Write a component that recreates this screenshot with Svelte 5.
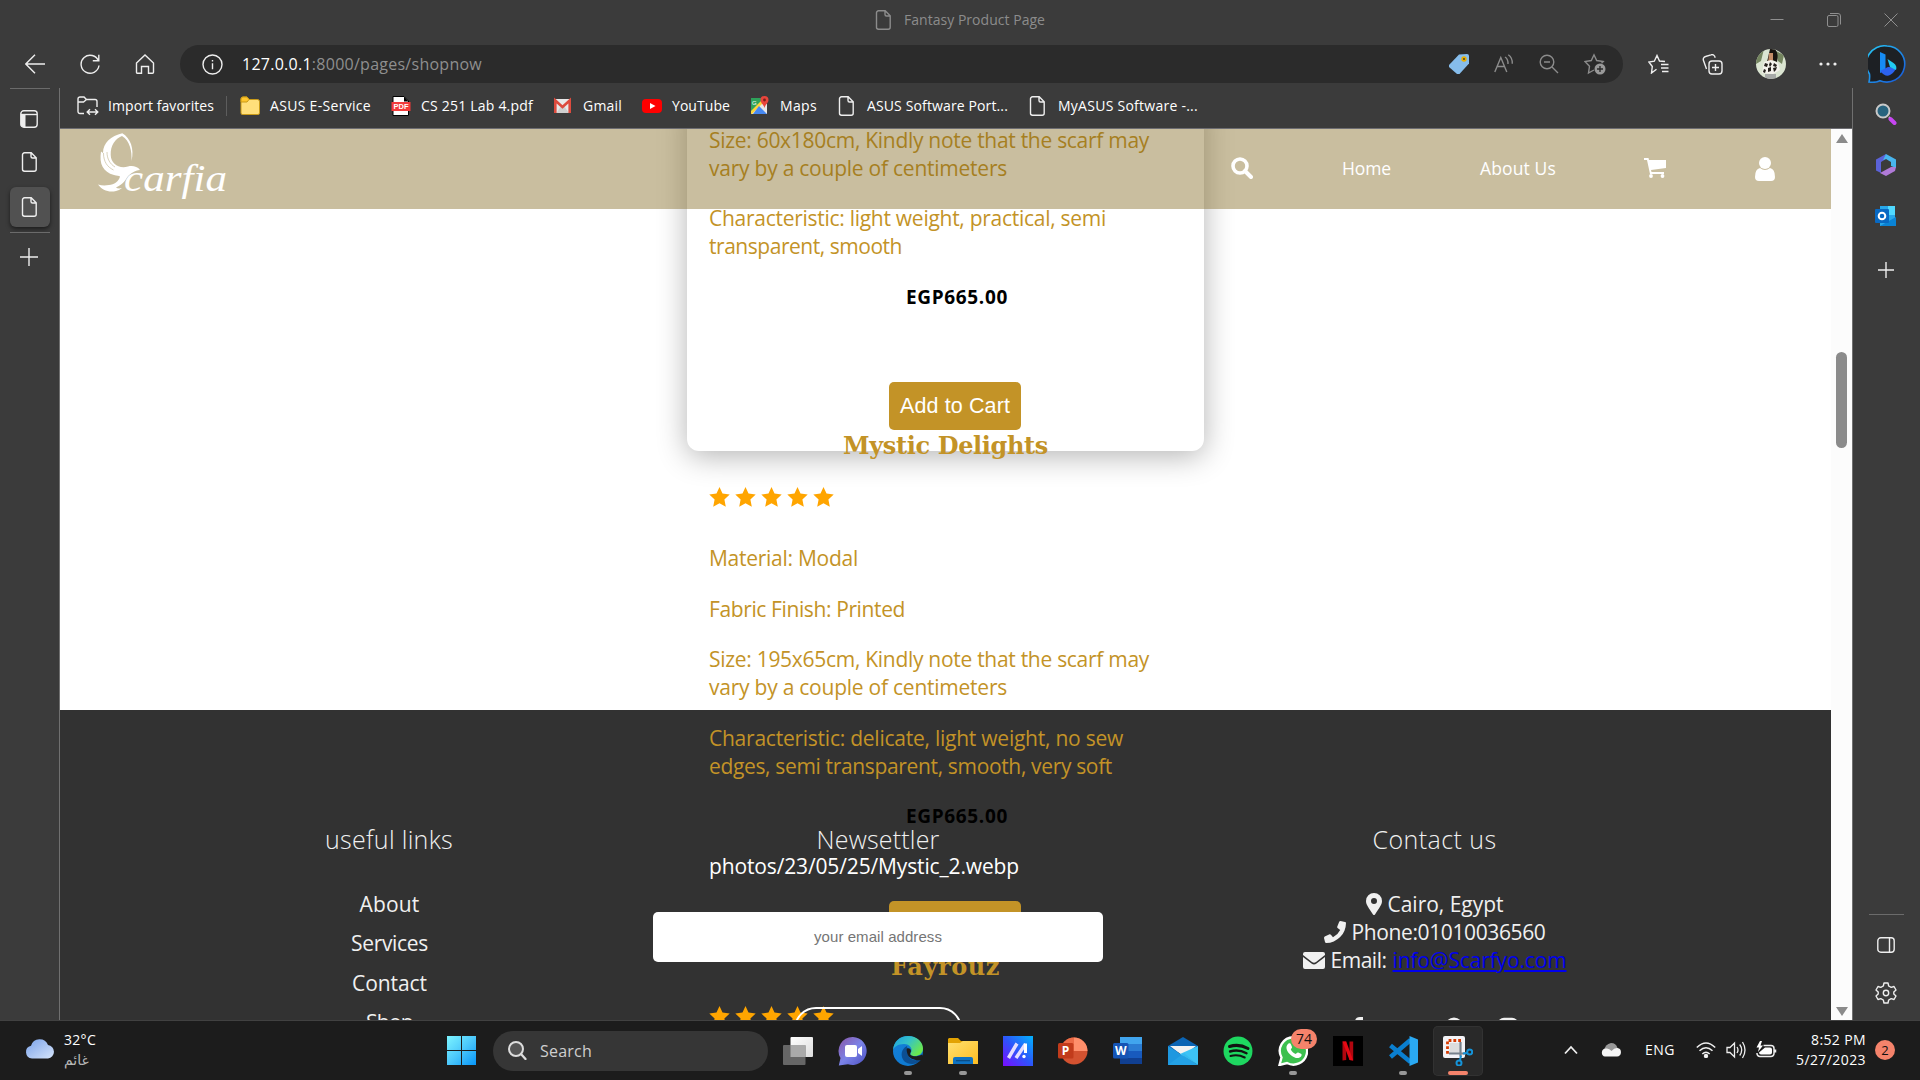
<script>
  // Spreads the letters of a label so that it fills the given width.
  function fit(node, width) {
    const natural = node.getBoundingClientRect().width;
    const spacing = (width - natural) / node.textContent.length;
    node.style.letterSpacing = `${spacing}px`;
  }

  const bookmarks = [
    { icon: 'folder', label: 'ASUS E-Service', width: 101 },
    { icon: 'pdf', label: 'CS 251 Lab 4.pdf', width: 112 },
    { icon: 'gmail', label: 'Gmail', width: 39 },
    { icon: 'youtube', label: 'YouTube', width: 58 },
    { icon: 'maps', label: 'Maps', width: 37 },
    { icon: 'page', label: 'ASUS Software Port...', width: 141 },
    { icon: 'page', label: 'MyASUS Software -...', width: 140 }
  ];
  const apps = [
    { icon: 'taskview' }, { icon: 'chat' }, { icon: 'edge', open: true },
    { icon: 'explorer', open: true }, { icon: 'myasus' }, { icon: 'powerpoint' },
    { icon: 'word' }, { icon: 'mail' }, { icon: 'spotify' },
    { icon: 'whatsapp', open: true, badge: '74' }, { icon: 'netflix' },
    { icon: 'vscode', open: true }, { icon: 'snip', active: true }
  ];
  const links = [['About', 60], ['Services', 77], ['Contact', 75], ['Shop', 47]];
</script>

{#snippet stars()}
  <div class="stars">
    {#each Array(5) as _}
      <svg width="21" height="20" viewBox="0 0 21 20"><path fill="#ffa500" d="M10.500 0l3 6.600 7.200.9-5.300 5 1.400 7.200-6.300-3.500-6.300 3.500 1.400-7.200-5.300-5 7.200-.9z" /></svg>
    {/each}
  </div>
{/snippet}

{#snippet icon(name)}
  {#if name === 'page'}
    <svg class="line" width="20" height="20" viewBox="0 0 20 20"><path d="M4.500.8h6.700l5 5v11.400a2 2 0 0 1-2 2H4.500a2 2 0 0 1-2-2V2.800a2 2 0 0 1 2-2zM11 1v3.500a1.500 1.500 0 0 0 1.500 1.500H16" /></svg>
  {:else if name === 'import'}
    <svg class="line" width="22" height="20" viewBox="0 0 22 20"><path d="M7 17.500H3a2 2 0 0 1-2-2V3a2 2 0 0 1 2-2h4l2.500 2.500H18a2 2 0 0 1 2 2V11M1 6h5.500l3-2.500M10.500 16h10M13 13.200 10.200 16l2.800 2.800M18 13.200l2.800 2.800-2.800 2.800" /></svg>
  {:else if name === 'folder'}
    <svg width="20" height="20" viewBox="0 0 20 20"><path d="M1 3a2 2 0 0 1 2-2h4l2 2.500h8.500A2 2 0 0 1 19.500 5.500V17a1.500 1.500 0 0 1-1.500 1.500H2.500A1.500 1.500 0 0 1 1 17z" fill="#ffdf7b" stroke="#c99a18" /><path d="M1 6V3a2 2 0 0 1 2-2h4l2 2.500L7 6z" fill="#ffc62e" stroke="#c99a18" /></svg>
  {:else if name === 'pdf'}
    <svg width="20" height="20" viewBox="0 0 20 20"><path d="M2 .5h11l4.500 4.500v14.500H2z" fill="#fff" stroke="#000" /><path d="M13 .5v5h4.500z" /><path fill="#f33b3b" d="M.5 6h19v9H.5z" /><text x="10" y="13.200" fill="#fff" font-size="7.500" font-weight="700" text-anchor="middle" font-family="Liberation Sans">PDF</text></svg>
  {:else if name === 'gmail'}
    <svg width="20" height="20" viewBox="0 0 20 20"><path fill="#e9e9e9" d="M1 3h17v14H1z" /><path fill="#cfcfcf" d="M3.500 17 8 10h3l5 7z" /><path d="M2.300 17V4.500L9.500 11l7.200-6.500V17" fill="none" stroke="#dd4b3e" stroke-width="2.600" /></svg>
  {:else if name === 'youtube'}
    <svg width="20" height="20" viewBox="0 0 20 20"><rect y="3" width="20" height="14" rx="4" fill="#f00" /><path fill="#fff" d="m8 7 5.500 3L8 13z" /></svg>
  {:else if name === 'maps'}
    <svg width="20" height="20" viewBox="0 0 20 20"><path fill="#2ea25a" d="M1 2h12v16H1z" /><path fill="#e8e8e8" d="M1 18 14 5l3 3v10z" /><path fill="#fbd33a" d="m1 15 11-11 2 2L2 18H1z" /><path fill="#4688f1" d="m9 10 8 8H3z" /><path d="M14.500 0a4 4 0 0 1 4 4c0 3-3 4-4 8-1-4-4-5-4-8a4 4 0 0 1 4-4z" fill="#e8453c" /><circle cx="14.500" cy="4" r="1.400" fill="#7b1f1a" /><text x="2" y="8.500" fill="#fff" font-size="6" font-family="Liberation Sans">G</text></svg>
  {:else if name === 'taskview'}
    <svg width="30" height="30" viewBox="0 0 30 30"><defs><linearGradient id="tv" x2="1" y2="1"><stop stop-color="#fff" /><stop offset="1" stop-color="#ddd" /></linearGradient></defs><rect x="7.500" y="1" width="22.500" height="20" rx="1" fill="url(#tv)" /><rect y="9" width="22.500" height="20" rx="1" fill="#666" /><path fill="#aaa" d="M7.500 9h15v12h-15z" /></svg>
  {:else if name === 'chat'}
    <svg width="30" height="30" viewBox="0 0 30 30"><defs><linearGradient id="ch" x2="1" y2="1"><stop stop-color="#8b55a5" /><stop offset=".5" stop-color="#7b83e8" /><stop offset="1" stop-color="#4b4fc0" /></linearGradient></defs><path fill="url(#ch)" d="M15 1a14 14 0 1 1-5 27.200L.8 29.500 2.500 22A14 14 0 0 1 15 1z" /><rect x="7" y="9" width="12" height="12" rx="2" fill="#fff" /><path fill="#fff" d="m20 13 4-3v10l-4-3z" /></svg>
  {:else if name === 'edge'}
    <svg width="30" height="30" viewBox="0 0 30 30"><defs><linearGradient id="e1" x2="1" y2=".6"><stop stop-color="#1b9de2" /><stop offset=".5" stop-color="#35c2c8" /><stop offset="1" stop-color="#6be84c" /></linearGradient><linearGradient id="e2" y2="1"><stop stop-color="#1680d8" /><stop offset="1" stop-color="#0b78d0" /></linearGradient></defs><circle cx="15" cy="15" r="15" fill="url(#e2)" /><path fill="#0c4f93" d="M14 10c-6 3-7 10-3 15 4 4 12 4 16 0 .7-.8 1-2 0-1.700-7 2.700-12-1-12-6z" /><path d="M0 14C1 5 7 0 15 0c9 0 15 6 15 12.500 0 5-4 7.500-8.500 7.500-3.500 0-5-1-3.500-3.500C20 13 17 8 11 8 5 8 1 11 0 14z" fill="url(#e1)" /><path fill="#1c1c1c" d="M14 12.500c2-1 4 .5 4 2.500-.3 2-2 3 .5 4.500 2 1.300 7 1 10.500-1l1 2-2 3.500c-5 1-12-1-13.500-6-.5-2-1.300-4.500-.5-5.500z" /></svg>
  {:else if name === 'explorer'}
    <svg width="30" height="30" viewBox="0 0 30 30"><defs><linearGradient id="ex" x2="1" y2="1"><stop stop-color="#ffe070" /><stop offset="1" stop-color="#fdbd22" /></linearGradient></defs><path fill="#e2a202" d="M1 2h9l3 3h17v10H0V3z" /><path fill="url(#ex)" d="M0 7h12l3-2h15v23H0z" /><path fill="#0e72c2" d="M5 23q0-2 2-2h16q2 0 2 2v5H5z" /><path fill="#0a4d86" d="M8 24h14v1.300H8z" /></svg>
  {:else if name === 'myasus'}
    <svg width="30" height="30" viewBox="0 0 30 30"><defs><linearGradient id="ma" x1="0" y1="1" x2="1" y2="0"><stop stop-color="#7a0cff" /><stop offset=".5" stop-color="#2d55fb" /><stop offset="1" stop-color="#02b4fd" /></linearGradient></defs><path fill="url(#ma)" d="M0 0h30v30H0z" /><path d="M5.500 22 14 7.500M13 22l9.500-14" stroke="#e5ddff" stroke-width="3.500" /><path d="M22.500 7.500V17" stroke="#fff" stroke-width="3" /><circle cx="21" cy="20.500" r="1.700" fill="#fff" /></svg>
  {:else if name === 'powerpoint'}
    <svg width="30" height="30" viewBox="0 0 30 30"><circle cx="16" cy="15" r="13.500" fill="#d35230" /><path fill="#ff8f6b" d="M16 1.500A13.500 13.500 0 0 1 29.500 15H16z" /><path fill="#ed6c47" d="M16 1.500V15H2.500A13.500 13.500 0 0 1 16 1.500z" /><rect y="7" width="15.500" height="15.500" rx="1.500" fill="#c13b1b" /><text x="7.500" y="19" fill="#fff" font-size="12" font-weight="700" text-anchor="middle" font-family="Open Sans">P</text></svg>
  {:else if name === 'word'}
    <svg width="30" height="30" viewBox="0 0 30 30"><path fill="#41a5ee" d="M7 1h22v7H7z" /><path fill="#2b7cd3" d="M7 8h22v7H7z" /><path fill="#185abd" d="M7 15h22v7H7z" /><path fill="#103f91" d="M7 22h22v6H7z" /><rect y="7" width="15.500" height="15.500" rx="1.500" fill="#1554b5" /><text x="7.700" y="19" fill="#fff" font-size="12" font-weight="700" text-anchor="middle" font-family="Open Sans">W</text></svg>
  {:else if name === 'mail'}
    <svg width="30" height="30" viewBox="0 0 30 30"><path fill="#0b64b4" d="M0 10 15 1l15 9v6H0z" /><path fill="#f2f2f2" d="M2 10h26L15 20z" /><path fill="#1e98e0" d="M0 10v19h30z" /><path fill="#3dc3f5" d="M30 10v19L12 18z" /><path fill="#2db0ee" d="M0 29 16 17l14 12z" opacity=".45" /></svg>
  {:else if name === 'spotify'}
    <svg width="30" height="30" viewBox="0 0 30 30"><circle cx="15" cy="15" r="14.500" fill="#1ed760" /><g fill="none" stroke="#121212" stroke-linecap="round"><path d="M6.500 10.500q9.500-3 18.500 2" stroke-width="3" /><path d="M7 15.500q8.500-2.500 16.500 1.700" stroke-width="2.400" /><path d="M7.500 20q7.500-2 14.200 1.500" stroke-width="2" /></g></svg>
  {:else if name === 'whatsapp'}
    <svg width="30" height="30" viewBox="0 0 30 30"><path d="M15.500 1.200A13.700 13.700 0 1 1 9 27l-7.500 2 2-7.500A13.700 13.700 0 0 1 15.500 1.200z" fill="#3cc04e" stroke="#fff" stroke-width="2.400" /><path fill="#fff" d="M10.500 7.500c1-.7 2-.3 2.500 1l1 2.500c.2 1-.8 1.600-1.200 2.400 1 2 2.700 3.600 5 4.600.8-.6 1.400-1.900 2.400-1.500l2.800 1.300c1 .6.700 2-.2 3-2.800 2.500-6.500 1-9.500-1.300-3-2.400-5.500-6-4.700-9.300.3-1.200 1-2 1.900-2.700z" /></svg>
  {:else if name === 'netflix'}
    <svg width="30" height="30" viewBox="0 0 30 30"><path d="M0 0h30v30H0z" /><path fill="#b1060f" d="M9.500 5.500h3.700V24l-3.700.5zM16.500 5.500h3.700v19l-3.700-.5z" /><path fill="#e50914" d="M9.500 5.500h3.700l7 19-3.700-.5z" /></svg>
  {:else if name === 'vscode'}
    <svg width="30" height="30" viewBox="0 0 30 30"><path fill="none" stroke="#0a7fd0" stroke-width="4.500" stroke-linejoin="round" d="m22.500 4-20 17M2.500 9.500l20 16.500" /><path fill="#2aa9f3" d="M21.500 0 30 3.500v23L21.500 30z" /></svg>
  {:else if name === 'snip'}
    <svg width="30" height="30" viewBox="0 0 30 30"><rect width="22" height="22" rx="2" fill="#f3f3f6" /><path fill="none" stroke="#d63b02" stroke-width="2.800" stroke-dasharray="2.800 2" d="M18 4.500H4.500V18" /><path d="M6.500 7h10v11h-10z" fill="#ddd" /><path fill="none" stroke="#77818b" stroke-width="2.200" d="M17.500 6v14.500M6 17.500h17" /><g fill="none" stroke="#1593d8" stroke-width="2"><circle cx="26.700" cy="16" r="2.500" /><circle cx="16" cy="27" r="2.500" /><path d="m17 24.500 1-5M20 17.500l4-.5" /></g></svg>
  {/if}
{/snippet}

<div class="screen">
  <header class="titlebar">
    <div class="caption">{@render icon('page')}<span use:fit={141}>Fantasy Product Page</span></div>
    <div class="window-buttons">
      <svg width="14" height="14" viewBox="0 0 14 14"><path d="M.5 6.500h13" /></svg>
      <svg width="14" height="14" viewBox="0 0 14 14"><rect x=".5" y="2.500" width="10.500" height="11" rx="1.500" /><path d="M3 .5h8a2.500 2.500 0 0 1 2.500 2.500v8.500" /></svg>
      <svg width="14" height="14" viewBox="0 0 14 14"><path d="m.5.500 13 13m0-13-13 13" /></svg>
    </div>
  </header>

  <div class="toolbar">
    <div class="nav-icons line">
      <svg width="20" height="20" viewBox="0 0 20 20"><path d="M20 10H.8M10 .8.8 10l9.200 9.200" /></svg>
      <svg width="20" height="20" viewBox="0 0 20 20"><path d="M18.500 7A9 9 0 1 0 19 11.500M18.800.8v6h-6" /></svg>
      <svg width="20" height="20" viewBox="0 0 20 20"><path d="M1.500 9 10 1l8.500 8v9.200a1 1 0 0 1-1 1h-4v-6.700h-7v6.700h-4a1 1 0 0 1-1-1z" /></svg>
    </div>
    <div class="address">
      <svg class="line" width="21" height="21" viewBox="0 0 21 21"><circle cx="10.500" cy="10.500" r="9.500" /><path d="M10.500 9.200v6M10.500 6v1.500" /></svg>
      <span class="url" use:fit={240}><b>127.0.0.1</b>:8000/pages/shopnow</span>
      <div class="address-icons line">
        <svg class="tag" width="20" height="20" viewBox="0 0 20 20"><path fill="#86bdec" stroke="none" d="M10 .5 18 0a2 2 0 0 1 2 2v7.500L10.500 20H8L0 13v-2z" /><circle cx="15" cy="5" r="1.800" fill="#333" stroke="#e8ae00" stroke-width="1.800" /></svg>
        <svg width="20" height="20" viewBox="0 0 20 20"><path d="m.8 18 6-14.500 6 14.500M3 12.500h7.500M11 3q3.200 2 3 7M14.300.8q4.300 3 4 9" /></svg>
        <svg width="20" height="20" viewBox="0 0 20 20"><circle cx="8" cy="8" r="6.800" /><path d="m13 13 6 6M5 8h6" /></svg>
        <svg width="22" height="22" viewBox="0 0 22 22"><path d="m10 17-5.500 3 1-6.700L1 8.500l6.300-1L10 1.800l2.700 5.700 6.500 1-1.700 1.700" /><circle cx="16" cy="16" r="5.500" fill="#999" stroke="none" /><path stroke="#2b2b2b" d="M16 13v6M13 16h6" /></svg>
      </div>
    </div>
    <div class="tools line">
      <svg width="21" height="20" viewBox="0 0 21 20"><path d="m8.500 15.300-5 3.700.8-6.500L.8 8l5.500-.8L9 1.500 11.500 7l5.500.5M13 10.500h7.500M13 14h7.500M14 17.500h6.500" /></svg>
      <svg width="21" height="21" viewBox="0 0 21 21"><rect x="7" y="7" width="13" height="13" rx="3" /><path d="M13.500 10v7M10 13.500h7M4.500 15 1.500 6.500a3 3 0 0 1 2-4L9 .800a3 3 0 0 1 4 3" /></svg>
      <svg class="avatar" width="30" height="30" viewBox="0 0 30 30"><clipPath id="av"><circle cx="15" cy="15" r="15" /></clipPath><g clip-path="url(#av)" stroke="none"><path fill="#dbe5d2" d="M0 0h30v30H0z" /><path fill="#74855f" d="M0 3 8 0 5 12l-5 3zM20 2l8 4-2 9-4-3z" /><path fill="#17130f" d="M14 0h5q4 5 2 13l-7-3-3 3z" /><path fill="#c38c68" d="M13 4h4v7l-5 4z" /><path fill="#f4f2ed" d="m8 13 7-2 7 3 2 7-7 4-11-1z" /><path fill="#24201c" d="m9 14 3 1-1 3-3-1zM14 13l2 2-2 3-1-2zM18 14l3 2-1 2-3-1zM12 19l3-1v4l-3 1zM17 19l4-1-1 3-2 2zM8 20l2 1-1 3-2-1z" /><path fill="#a7aaa8" d="M9 25h11v6H9z" /></g></svg>
      <svg width="18" height="4" viewBox="0 0 18 4"><g fill="#eee" stroke="none"><circle cx="2" cy="2" r="1.600" /><circle cx="9" cy="2" r="1.600" /><circle cx="16" cy="2" r="1.600" /></g></svg>
      <svg class="bing" width="38" height="38" viewBox="0 0 38 38"><defs><linearGradient id="bg" y2="1"><stop stop-color="#27c9f5" /><stop offset="1" stop-color="#1754d8" /></linearGradient></defs><path fill="#1d2024" stroke="url(#bg)" stroke-width="1.600" d="M19 1a18 18 0 1 1-7 34.700Q7 38 1 37q1-4 .5-8A18 18 0 0 1 19 1z" /><path fill="#168cf4" stroke="none" d="m12 7 5.500 2.500V25L12 28z" /><path fill="#2c62ef" stroke="none" d="m12 26 8-4 8 .5q-1 4.500-6 7.500-4.500 2.500-10-4z" /><path fill="#21caf1" stroke="none" d="m19.500 14 6 4q4 3 2.500 7l-6-3z" /></svg>
    </div>
  </div>

  <div class="body">
    <aside class="left line">
      <svg width="18" height="18" viewBox="0 0 18 18"><rect x=".8" y=".8" width="16.400" height="16.400" rx="3" /><path d="M1 4.500h16" /><path fill="#eee" stroke="none" d="M1 4h4.500v13H3a2 2 0 0 1-2-2z" /></svg>
      <span class="tab">{@render icon('page')}</span>
      <span class="tab active">{@render icon('page')}</span>
      <svg class="plus" width="18" height="18" viewBox="0 0 18 18"><path d="M9 0v18M0 9h18" /></svg>
    </aside>

    <div class="center">
      <div class="bookmarks">
        <div class="bookmark import">{@render icon('import')}<span use:fit={106}>Import favorites</span></div>
        {#each bookmarks as b}
          <div class="bookmark">{@render icon(b.icon)}<span use:fit={b.width}>{b.label}</span></div>
        {/each}
      </div>

      <div class="view">
        <main class="page">
          <div class="footer-back"></div>

          <div class="products">
            <section class="card">
              <p><span use:fit={440}>Size: 60x180cm, Kindly note that the scarf may</span><span use:fit={298}>vary by a couple of centimeters</span></p>
              <p><span use:fit={397}>Characteristic: light weight, practical, semi</span><span use:fit={193}>transparent, smooth</span></p>
              <div class="price"><span use:fit={102}>EGP665.00</span></div>
              <button class="add"><span use:fit={110}>Add to Cart</span></button>
            </section>
            <section class="product">
              <h2><span use:fit={205}>Mystic Delights</span></h2>
              {@render stars()}
              <p><span use:fit={149}>Material: Modal</span></p>
              <p class="finish"><span use:fit={196}>Fabric Finish: Printed</span></p>
              <p><span use:fit={440}>Size: 195x65cm, Kindly note that the scarf may</span><span use:fit={298}>vary by a couple of centimeters</span></p>
              <p><span use:fit={414}>Characteristic: delicate, light weight, no sew</span><span use:fit={403}>edges, semi transparent, smooth, very soft</span></p>
              <div class="price"><span use:fit={102}>EGP665.00</span></div>
              <p class="file"><span use:fit={310}>photos/23/05/25/Mystic_2.webp</span></p>
              <button class="add"><span use:fit={110}>Add to Cart</span></button>
              <h2 class="next"><span use:fit={109}>Fayrouz</span></h2>
              {@render stars()}
            </section>
          </div>

          <footer>
            <div class="col">
              <h3><span use:fit={128}>useful links</span></h3>
              <div class="links">
                {#each links as [label, width]}<a href="#top"><span use:fit={width}>{label}</span></a>{/each}
              </div>
            </div>
            <div class="col">
              <h3><span use:fit={123}>Newsettler</span></h3>
              <div class="email"><span use:fit={128}>your email address</span></div>
              <div class="subscribe"></div>
            </div>
            <div class="col contact-col">
              <h3><span use:fit={124}>Contact us</span></h3>
              <div class="contact">
                <div><svg width="16" height="22" viewBox="0 0 16 22"><path fill-rule="evenodd" d="M8 0a8 8 0 0 1 8 8c0 4-3 7-7 13.400q-1 1.200-2 0C3 15 0 12 0 8a8 8 0 0 1 8-8zm0 5a3 3 0 1 0 0 6 3 3 0 0 0 0-6z" /></svg><span use:fit={116}>Cairo, Egypt</span></div>
                <div><svg width="22" height="22" viewBox="0 0 22 22"><path d="m21 1-4.500-1q-1 0-1.300.8l-2 4.900q-.2.800.4 1.300l2.600 2.100a16 16 0 0 1-7.200 7.200l-2.100-2.600q-.5-.6-1.300-.4l-4.900 2.100Q0 16 0 17l1 4q.3 1 1.200 1A20 20 0 0 0 22 2.100Q22 1.200 21 1z" /></svg><span use:fit={194}>Phone:01010036560</span></div>
                <div><svg width="22" height="17" viewBox="0 0 22 17"><path d="M2 0h18a2 2 0 0 1 2 2v1l-9 7q-2 1.500-4 0L0 3V2a2 2 0 0 1 2-2zM0 5l8.500 6.500q2.500 2 5 0L22 5v10a2 2 0 0 1-2 2H2a2 2 0 0 1-2-2z" /></svg><span use:fit={56}>Email:</span><a href="mailto:info@Scarfyo.com"><span use:fit={174}>info@Scarfyo.com</span></a></div>
              </div>
              <div class="social">
                <svg width="13" height="22" viewBox="0 0 13 22"><path d="M12 0v3.500h-2Q8 3.500 8 5.500V8h4l-.6 4H8v10H4V12H0V8h4V5Q4 0 9 0z" /></svg>
                <svg width="18" height="22" viewBox="0 0 18 22"><circle cx="9" cy="9.500" r="9" /></svg>
                <svg width="20" height="20" viewBox="0 0 20 20"><rect x="1" y="2" width="18" height="18" rx="5" fill="none" stroke="#f0f0f0" stroke-width="2.500" /></svg>
              </div>
            </div>
          </footer>

          <nav>
            <svg class="logo" width="136" height="76" viewBox="0 0 136 76">
              <path d="M25.300 2.300C14 5 6 12 6 22L4 20.500C2 33 6 41 17 44c3 1 5 .5 6 1.500-1 5-6 8-11 8.500q-6 1-11-.5C5 59 12 62 19 60q3-.6 6-3-4 1-6-.5c7-3 9-7 11-10 3-4 8-7 13-7.500-3-4-8-4.500-12-3.500C22 38 14 33 13.700 24 13.500 14 18 8 25 5c8 5 10 15 9.500 25 3-12-1-23-9.200-27.700z" />
              <path class="fold" d="M6.500 22c0 9 4 14 10 17M10 21c0 7 3 12 8 15" />
              <text x="27" y="60" textLength="103" lengthAdjust="spacingAndGlyphs">carfia</text>
            </svg>
            <svg width="22" height="22" viewBox="0 0 22 22"><circle cx="9" cy="9" r="7" fill="none" stroke="#fff" stroke-width="3.600" /><path d="m14 14 6 6" stroke="#fff" stroke-width="4" stroke-linecap="round" /></svg>
            <span class="home" use:fit={49}>Home</span>
            <span class="about" use:fit={76}>About Us</span>
            <svg class="cart" width="22" height="20" viewBox="0 0 22 20"><path d="M0 0h4.500L5 2h17v8L7 12l.5 2H20v2H6L3 2H0z" /><circle cx="7" cy="18" r="1.900" /><circle cx="18.500" cy="18" r="1.900" /></svg>
            <svg class="user" width="20" height="24" viewBox="0 0 20 24"><circle cx="10" cy="6" r="6" /><path d="M5 11q5 4 10 0 5 1 5 9 0 4-4 4H4q-4 0-4-4 0-8 5-9z" /></svg>
          </nav>
        </main>
        <div class="scrollbar"><i class="up"></i><i class="thumb"></i><i class="down"></i></div>
      </div>
    </div>

    <aside class="right line">
      <svg width="22" height="22" viewBox="0 0 22 22"><circle cx="8" cy="8" r="6.500" fill="#28637e" stroke="#c9c9c9" stroke-width="2" /><path d="m14 14 1.500 1.500" stroke="#c9c9c9" stroke-width="2" /><path d="m15.500 16 4 4" stroke="#c746f2" stroke-width="4" stroke-linecap="round" /></svg>
      <svg width="22" height="22" viewBox="0 0 22 22"><g stroke="none"><path fill="#5b62d8" d="M11 0 1 5.500v11L6 19V8l5-3z" /><path fill="#48b5ee" d="m11 0 10 5.500V14l-5-2V8l-5-3-3 1z" /><path fill="#b07ad8" d="m21 13-1 4-9 5-6-3 11-6z" /></g></svg>
      <svg width="22" height="22" viewBox="0 0 22 22"><g stroke="none"><path fill="#28a8ea" d="M5 1h15v20H5z" /><path fill="#50d9ff" d="M13 1h7v9h-7z" /><path fill="#0a83d5" d="m5 21 16-9v9z" /><rect y="4" width="14" height="14" rx="1" fill="#0869c3" /></g><circle cx="7" cy="11" r="3.300" stroke="#fff" stroke-width="2" /></svg>
      <svg width="16" height="16" viewBox="0 0 16 16"><path d="M8 0v16M0 8h16" /></svg>
      <svg class="panel" width="18" height="16" viewBox="0 0 18 16"><rect x=".8" y=".8" width="16.400" height="14.400" rx="3" /><path d="M12.500 1v14" /></svg>
      <svg class="gear" width="22" height="22" viewBox="0 0 22 22"><path d="M9 1h4l.7 3 2.500 1.400L19 4.500 21 8l-2.200 2v2L21 14l-2 3.500-2.800-.9-2.500 1.400L13 21H9l-.7-3-2.500-1.400-2.800.9L1 14l2.200-2v-2L1 8l2-3.500 2.800.9L8.300 4z" stroke-linejoin="round" /><circle cx="11" cy="11" r="2.700" /></svg>
    </aside>
  </div>

  <div class="taskbar">
    <svg class="weather" width="30" height="20" viewBox="0 0 30 20"><defs><linearGradient id="cl" y2="1"><stop stop-color="#7ba3ea" /><stop offset="1" stop-color="#d5e4fb" /></linearGradient></defs><path fill="url(#cl)" d="M7 19.500a6.500 6.500 0 0 1-1-12.800A9 9 0 0 1 23 6a6.800 6.800 0 0 1 0 13.500z" /></svg>
    <div class="temp"><span use:fit={32}>32°C</span><span class="arabic">غائم</span></div>
    <svg class="start" width="29" height="29" viewBox="0 0 29 29"><defs><linearGradient id="wn" x2="29" y2="29" gradientUnits="userSpaceOnUse"><stop stop-color="#7df5ff" /><stop offset=".5" stop-color="#4cc8fb" /><stop offset="1" stop-color="#0795f8" /></linearGradient></defs><path fill="url(#wn)" d="M0 0h14v14H0zM15 0h14v14H15zM0 15h14v14H0zM15 15h14v14H15z" /></svg>
    <div class="search"><svg width="19" height="19" viewBox="0 0 19 19"><circle cx="8" cy="8" r="7" fill="#555" stroke="#ddd" stroke-width="2" /><path d="m13 13 4.500 5" stroke="#ddd" stroke-width="2.300" stroke-linecap="round" /></svg><span use:fit={52}>Search</span></div>
    <div class="apps">
      {#each apps as app}
        <div class="app" class:open={app.open} class:current={app.active}>
          {@render icon(app.icon)}
          {#if app.badge}<span class="badge">{app.badge}</span>{/if}
        </div>
      {/each}
    </div>
    <div class="tray line">
      <svg class="chevron" width="14" height="10" viewBox="0 0 14 10"><path d="m1 8.500 6-6.500 6 6.500" stroke-width="1.800" /></svg>
      <svg class="onedrive" width="20" height="14" viewBox="0 0 20 14"><path fill="#999" stroke="none" d="M3 8Q4 1 10 0q5 0 6.500 5L7 12z" /><path fill="#f5f5f5" stroke="none" d="M4 13.500a4 4 0 0 1 1-7.900q3-.6 5.500 2.400 3-3.500 6-3a4.300 4.300 0 0 1-.5 8.500z" /></svg>
      <span class="lang" use:fit={30}>ENG</span>
      <svg class="wifi" width="20" height="16" viewBox="0 0 20 16"><path d="M.8 5.500q9.200-9 18.400 0M3.500 8.800q6.500-6 13 0M6.300 12q3.700-3.500 7.400 0" stroke-width="1.500" /><circle cx="10" cy="14" r="1.500" fill="#fff" /></svg>
      <svg class="sound" width="20" height="18" viewBox="0 0 20 18"><path d="M1 6.500h3L8.500 2v14L4 11.500H1zM11 6q2 3 0 6M13.700 3.500q4 5.500 0 11M16.500 1q5 8 0 16" stroke-width="1.300" /></svg>
      <svg class="battery" width="21" height="18" viewBox="0 0 21 18"><path d="M7.500 4.500H15a3 3 0 0 1 3 3v5a3 3 0 0 1-3 3H4a3 3 0 0 1-3-3V12M19.500 8.500v3" stroke-width="1.500" /><path fill="#fff" stroke="none" d="M9 6.500h5q2 0 2 2v3q0 2-2 2H5q-2 0-2-2zM4 0 .5 6.500H3L2 11l5-6.500H4.500L6 0z" /></svg>
      <div class="clock"><span use:fit={55}>8:52 PM</span><span use:fit={70}>5/27/2023</span></div>
      <span class="count">2</span>
    </div>
  </div>
</div>

<style>
  :global(body) { margin: 0; overflow: hidden; background: #3b3b3b; }
  * { box-sizing: border-box; }
  .screen { width: 1920px; height: 1080px; display: flex; flex-direction: column; overflow: hidden; background: #3b3b3b; color: #fff; font: 14px/20px "Open Sans", "Noto Sans", sans-serif; }
  svg { flex: none; display: block; }
  span { display: inline-block; white-space: nowrap; flex: none; }
  .line, .line :global(svg) { fill: none; stroke: #eee; stroke-width: 1.4; }

  .titlebar { height: 45px; display: flex; flex: none; }
  .caption { display: flex; align-items: center; gap: 10px; height: 40px; padding-left: 874px; color: #8c8c8c; }
  .caption svg { stroke: #8c8c8c; }
  .window-buttons { display: flex; gap: 43px; margin: 13px 22px 0 auto; fill: none; stroke: #8f8f8f; }

  .toolbar { height: 43px; display: flex; flex: none; align-items: flex-start; }
  .nav-icons { display: flex; align-items: center; gap: 35px; width: 180px; height: 37px; padding-left: 25px; flex: none; }
  .address { display: flex; align-items: center; width: 1443px; height: 38px; padding: 0 17px 0 22px; border-radius: 19px; background: #2b2b2b; flex: none; }
  .url { margin-left: 19px; color: #8f8f8f; font-size: 16px; }
  .url b { color: #fff; font-weight: 400; }
  .address-icons { display: flex; align-items: center; gap: 25px; margin-left: auto; }
  .address-icons svg { stroke: #8c8c8c; }
  .tools { display: flex; align-items: center; height: 38px; padding-left: 25px; }
  .tools svg:nth-child(2), .tools .avatar { margin-left: 33px; }
  .tools svg:nth-child(4) { margin-left: 33px; }
  .tools .bing { margin-left: 31px; }

  .body { height: 932px; display: flex; flex: none; }
  .left { width: 60px; display: flex; flex-direction: column; align-items: center; border-right: 1px solid #707070; position: relative; flex: none; }
  .left > svg:first-child { margin: 22px 2px 14px 0; }
  .left::before { content: ""; position: absolute; top: 0; left: 10px; width: 40px; height: 1px; background: #6b6b6b; }
  .left::after { content: ""; position: absolute; top: 144px; left: 10px; width: 40px; height: 1px; background: #6b6b6b; }
  .tab { width: 40px; height: 40px; display: grid; place-items: center; border-radius: 6px; margin-left: 1px; }
  .tab.active { margin-top: 5px; background: #515151; box-shadow: 0 2px 4px #0008; }
  .left .plus { margin: 21px 1px 0 0; }

  .center { width: 1792px; flex: none; display: flex; flex-direction: column; }
  .bookmarks { display: flex; align-items: center; height: 41px; padding: 0 0 4px 17px; gap: 20px; border-bottom: 1px solid #6d6d72; }
  .bookmark { display: flex; align-items: center; gap: 10px; }
  .import { gap: 9px; padding-right: 12px; border-right: 1px solid #5d5d5d; margin-right: -7px; }

  .view { display: flex; height: 891px; }
  .page { display: grid; grid-template: 891px / 1771px; width: 1771px; height: 891px; overflow: hidden; background: #fff; flex: none; }
  .page > * { grid-area: 1 / 1; }
  .footer-back { margin-top: 581px; background: #323232; }
  .products { display: flex; flex-direction: column; width: 517px; margin-left: 627px; z-index: 1; color: #c39327; font-size: 21px; line-height: 28px; }
  .card { height: 352px; margin-top: -30px; padding: 27px 22px 0; border-radius: 12px; background: #fff; box-shadow: 0 5px 30px rgba(0, 0, 0, .3); display: flex; flex-direction: column; flex: none; }
  p { margin: 0 0 22px; display: flex; flex-direction: column; align-items: flex-start; }
  .price { margin: 2px 0 72px 197px; color: #000; font-size: 19px; font-weight: 700; line-height: 26px; }
  .add { width: 132px; height: 48px; flex: none; padding: 0; margin-left: 180px; border: 0; border-radius: 5px; background: #c39327; color: #fff; font: 21.500px/24px "Liberation Sans", sans-serif; }
  .product { display: flex; flex-direction: column; margin-top: -21px; padding: 0 22px; }
  h2 { height: 30px; margin: 0 0 27px; text-align: center; font: bold 24px/32px "DejaVu Serif", serif; }
  .stars { display: flex; gap: 5px; height: 20px; margin-bottom: 37px; }
  .product p { margin-bottom: 23px; }
  .product .finish { margin-bottom: 22px; }
  .product .price { margin: 0 0 23px 197px; }
  .product .file { margin-bottom: 21px; color: #fff; }
  .next { margin: 2px 0 25px; }

  footer { z-index: 2; display: grid; grid-template-columns: 658px 320px 790px; margin-top: 581px; padding-top: 112px; color: #f0f0f0; font-size: 21px; line-height: 28px; fill: #f0f0f0; }
  .col { display: flex; flex-direction: column; align-items: center; }
  .contact-col { padding-left: 3px; }
  h3 { margin: 0 0 34px; font-size: 25px; font-weight: 300; line-height: 34px; }
  .links { display: flex; flex-direction: column; align-items: center; gap: 11.300px; padding-left: 1px; }
  .links a { height: 28px; color: inherit; text-decoration: none; }
  .email { width: 450px; height: 50px; flex: none; display: grid; place-items: center; margin-top: 22px; border-radius: 5px; background: #fff; color: #757575; font: 15px/18px "Liberation Sans", sans-serif; }
  .subscribe { width: 168px; height: 54px; flex: none; margin-top: 45px; border: 2px solid #fff; border-radius: 22px; }
  .contact div { display: flex; justify-content: center; align-items: center; gap: 6px; height: 28px; }
  .contact a { color: #00e; text-decoration: none; }
  .contact a span { text-decoration: underline; text-decoration-thickness: 2px; text-underline-offset: 2px; }
  .social { display: flex; gap: 81px; margin: 43px 0 0 0; }
  .social svg:last-child { margin-left: -46px; }

  nav { z-index: 3; display: flex; align-items: center; height: 80px; padding-bottom: 3px; background: rgba(126, 100, 26, .42); color: #fff; fill: #fff; font-size: 17.500px; line-height: 24px; }
  .logo { margin: 3px 998px 0 37px; }
  .logo text { font: italic 37px "Liberation Serif", serif; }
  .fold { fill: none; stroke: #c9be9f; stroke-width: .7; }
  .home { margin-left: 89px; }
  .about { margin-left: 89px; }
  .cart { margin-left: 88px; }
  .user { margin: 2px 0 0 89px; }

  .scrollbar { width: 21px; display: flex; flex-direction: column; align-items: center; background: #fcfcfc; }
  .up, .down { border: 6px solid transparent; border-top: 0; border-bottom: 9px solid #8b8b8b; margin-top: 5px; }
  .thumb { width: 11px; height: 96px; border-radius: 6px; margin-top: 209px; background: #8b8b8b; }
  .down { border-bottom: 0; border-top: 9px solid #8b8b8b; margin: auto 0 4px; }

  .right { position: relative; width: 68px; display: flex; flex-direction: column; align-items: center; gap: 29px; padding: 15px 1px 0 0; border-left: 1px solid #707070; }
  .right svg:nth-child(4) { margin-top: 6px; }
  .right .panel { margin-top: auto; }
  .right .gear { margin-bottom: 16px; }
  .right::after { content: ""; position: absolute; top: 826px; left: 16px; width: 35px; height: 1px; background: #6b6b6b; }

  .taskbar { height: 60px; display: flex; align-items: center; flex: none; border-top: 1px solid #414141; background: #1c1c1c; }
  .weather { margin: -4px 9px 0 25px; }
  .temp { width: 383px; display: flex; flex-direction: column; align-items: flex-start; margin-top: -2px; }
  .arabic { color: #b8b8b8; font-family: "DejaVu Sans", sans-serif; font-size: 14px; }
  .search { display: flex; align-items: center; gap: 13px; width: 275px; height: 40px; margin-left: 17px; padding-left: 15px; border-radius: 20px; background: #363636; color: #cfcfcf; font-size: 16px; }
  .apps { display: flex; gap: 5px; margin-left: 5px; }
  .app { position: relative; width: 50px; height: 50px; display: grid; place-items: center; border-radius: 5px; }
  .app.current { background: #292929; box-shadow: inset 0 0 0 1px #323232; }
  .open::after, .current::after { content: ""; position: absolute; bottom: 1px; left: 21px; width: 8px; height: 4px; border-radius: 2px; background: #979797; }
  .current::after { left: 15px; width: 20px; background: #f5836b; }
  .badge { position: absolute; top: 3px; left: 23px; width: 26px; height: 20px; border-radius: 10px; background: #f5836b; color: #111; text-align: center; line-height: 20px; }
  .tray { display: flex; align-items: center; stroke: none; margin-top: -1px; }
  .chevron { margin-left: 81px; }
  .onedrive { margin-left: 23px; }
  .lang { margin-left: 24px; }
  .wifi { margin-left: 21px; }
  .sound { margin-left: 10px; }
  .battery { margin-left: 10px; }
  .clock { display: flex; flex-direction: column; align-items: flex-end; width: 89px; }
  .count { width: 20px; height: 20px; margin-left: 9px; border-radius: 50%; background: #f5836b; color: #111; font-size: 13px; text-align: center; line-height: 20px; }
</style>
